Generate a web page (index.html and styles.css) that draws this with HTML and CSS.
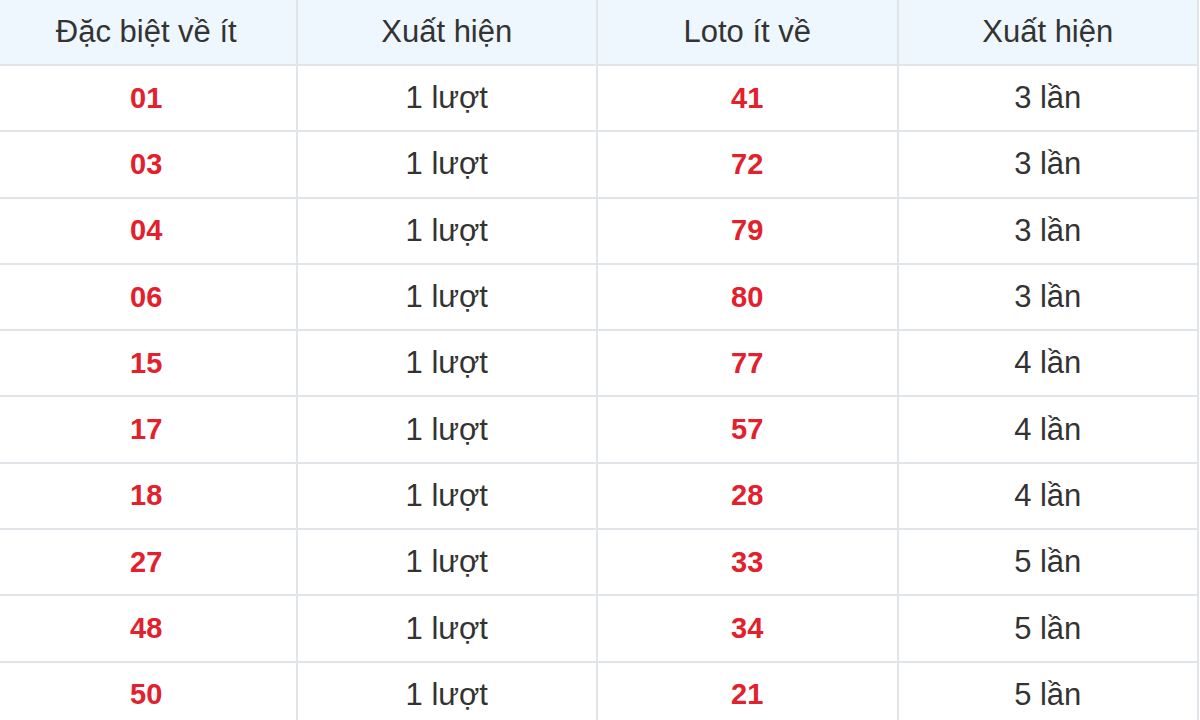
FILE: index.html
```html
<!DOCTYPE html>
<html lang="vi">
<head>
<meta charset="utf-8">
<title>Thống kê</title>
<link rel="stylesheet" href="styles.css">
</head>
<body>
<table class="stats">
  <thead>
    <tr><th>Đặc biệt về ít</th><th>Xuất hiện</th><th>Loto ít về</th><th>Xuất hiện</th></tr>
  </thead>
  <tbody>
    <tr><td class="num">01</td><td>1 lượt</td><td class="num">41</td><td>3 lần</td></tr>
    <tr><td class="num">03</td><td>1 lượt</td><td class="num">72</td><td>3 lần</td></tr>
    <tr><td class="num">04</td><td>1 lượt</td><td class="num">79</td><td>3 lần</td></tr>
    <tr><td class="num">06</td><td>1 lượt</td><td class="num">80</td><td>3 lần</td></tr>
    <tr><td class="num">15</td><td>1 lượt</td><td class="num">77</td><td>4 lần</td></tr>
    <tr><td class="num">17</td><td>1 lượt</td><td class="num">57</td><td>4 lần</td></tr>
    <tr><td class="num">18</td><td>1 lượt</td><td class="num">28</td><td>4 lần</td></tr>
    <tr><td class="num">27</td><td>1 lượt</td><td class="num">33</td><td>5 lần</td></tr>
    <tr><td class="num">48</td><td>1 lượt</td><td class="num">34</td><td>5 lần</td></tr>
    <tr><td class="num">50</td><td>1 lượt</td><td class="num">21</td><td>5 lần</td></tr>
  </tbody>
</table>
</body>
</html>
```
FILE: styles.css
```css
html, body {
  margin: 0;
  padding: 0;
  background: #ffffff;
  overflow: hidden;
}
.stats {
  border-collapse: collapse;
  table-layout: fixed;
  width: 1204px;
  margin-left: -5px;
  font-family: "Liberation Sans", Arial, sans-serif;
  font-size: 31px;
  color: #333333;
}
.stats th,
.stats td {
  border: 2px solid #e1e4e8;
  text-align: center;
  vertical-align: middle;
  padding: 0;
}
.stats th {
  border-top: none;
  height: 64px;
  background: #eef6fe;
  font-weight: normal;
}
.stats td {
  height: 64.3px;
}
.stats td.num {
  color: #e3202d;
  font-weight: bold;
  font-size: 29px;
}
```
